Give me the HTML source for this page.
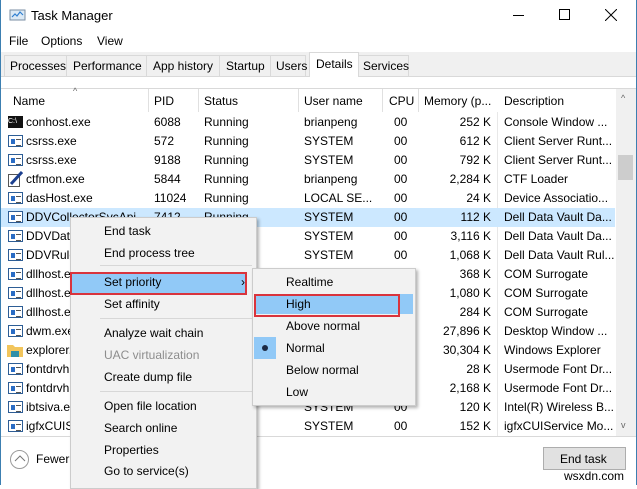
<!DOCTYPE html>
<html><head><meta charset="utf-8"><style>
*{margin:0;padding:0;box-sizing:border-box}
body{width:637px;height:485px;overflow:hidden;background:#fff;font-family:"Liberation Sans",sans-serif;font-size:12px;color:#000;position:relative}
.a{position:absolute;white-space:nowrap}
.row{position:absolute;left:1px;width:614px;height:19px}
.c{position:absolute;top:2px;white-space:nowrap;overflow:hidden}
.ic{position:absolute;left:7px;top:3px;width:15px;height:12px;border:1px solid #2d5d95;background:#fff}
.ic:before{content:"";position:absolute;left:2px;top:3px;width:4px;height:5px;background:#2a6cc4}
.ic:after{content:"";position:absolute;left:7px;top:3px;width:5px;height:5px;border-top:1px solid #555;border-bottom:1px solid #555}
.vl{position:absolute;top:89px;width:1px;height:347px;background:#e8e8e8}
.hl{position:absolute;top:89px;width:1px;height:23px;background:#e0e0e0}
.m{position:absolute;left:104px;white-space:nowrap}
.s{position:absolute;left:286px;white-space:nowrap}
</style></head><body>
<div class="a" style="left:0;top:0;width:1px;height:485px;background:#3c7fb1"></div>
<div class="a" style="left:636px;top:0;width:1px;height:485px;background:#3c7fb1"></div>
<!-- title -->
<svg class="a" style="left:9px;top:8px" width="18" height="14"><rect x="1" y="2" width="15" height="10" fill="#dbe9f5" stroke="#7a8ea3"/><polyline points="3,9 6,6 8,8 11,4 14,7" fill="none" stroke="#2f7fd0" stroke-width="1.2"/></svg>
<div class="a" style="left:31px;top:8px;font-size:13px">Task Manager</div>
<div class="a" style="left:513px;top:15px;width:11px;height:1px;background:#000"></div>
<div class="a" style="left:559px;top:9px;width:11px;height:11px;border:1px solid #000"></div>
<svg class="a" style="left:605px;top:9px" width="12" height="12"><path d="M0 0L12 12M12 0L0 12" stroke="#000" stroke-width="1"/></svg>
<!-- menu -->
<div class="a" style="left:9px;top:34px">File</div>
<div class="a" style="left:41px;top:34px">Options</div>
<div class="a" style="left:97px;top:34px">View</div>
<!-- tabs -->
<div class="a" style="left:1px;top:52px;width:635px;height:24px;background:#f0f0f0"></div>
<div class="a" style="left:1px;top:76px;width:635px;height:1px;background:#d9d9d9"></div>
<div class="a" style="left:4px;top:55px;width:302px;height:21px;border:1px solid #d9d9d9;border-bottom:none;background:#f0f0f0"></div>
<div class="a" style="left:66px;top:55px;width:1px;height:21px;background:#d9d9d9"></div>
<div class="a" style="left:146px;top:55px;width:1px;height:21px;background:#d9d9d9"></div>
<div class="a" style="left:219px;top:55px;width:1px;height:21px;background:#d9d9d9"></div>
<div class="a" style="left:270px;top:55px;width:1px;height:21px;background:#d9d9d9"></div>
<div class="a" style="left:309px;top:52px;width:50px;height:25px;border:1px solid #d9d9d9;border-bottom:none;background:#fff"></div>
<div class="a" style="left:358px;top:55px;width:51px;height:21px;border:1px solid #d9d9d9;border-bottom:none;background:#f0f0f0"></div>
<div class="a" style="left:10px;top:59px">Processes</div>
<div class="a" style="left:73px;top:59px">Performance</div>
<div class="a" style="left:153px;top:59px">App history</div>
<div class="a" style="left:226px;top:59px">Startup</div>
<div class="a" style="left:276px;top:59px">Users</div>
<div class="a" style="left:316px;top:57px">Details</div>
<div class="a" style="left:363px;top:59px">Services</div>
<!-- list -->
<div class="a" style="left:1px;top:88px;width:635px;height:1px;background:#d9d9d9"></div>
<div class="a" style="left:73px;top:86px;font-size:9px;color:#666">^</div>
<div class="a" style="left:13px;top:94px">Name</div>
<div class="a" style="left:154px;top:94px">PID</div>
<div class="a" style="left:204px;top:94px">Status</div>
<div class="a" style="left:304px;top:94px">User name</div>
<div class="a" style="left:389px;top:94px">CPU</div>
<div class="a" style="left:424px;top:94px">Memory (p...</div>
<div class="a" style="left:504px;top:94px">Description</div>
<div class="hl" style="left:148px"></div><div class="hl" style="left:198px"></div><div class="hl" style="left:298px"></div><div class="hl" style="left:382px"></div><div class="hl" style="left:418px"></div>
<div class="vl" style="left:497px;top:112px;height:324px"></div>
<div class="a" style="left:616px;top:89px;width:20px;height:347px;background:#f0f0f0"></div>
<div class="a" style="left:618px;top:155px;width:15px;height:25px;background:#cdcdcd"></div>
<div class="a" style="left:621px;top:93px;font-size:9px;color:#666">^</div>
<div class="a" style="left:621px;top:420px;font-size:9px;color:#666">v</div>
<div class="row" style="top:208px;background:#cce8ff"></div>

<div class="row" style="top:113px"><div class="a" style="left:7px;top:3px;width:15px;height:12px;background:#111;color:#fff;font-size:7px;line-height:12px">C:\</div><div class="c" style="left:25px">conhost.exe</div><div class="c" style="left:153px">6088</div><div class="c" style="left:203px">Running</div><div class="c" style="left:303px">brianpeng</div><div class="c" style="left:393px">00</div><div class="c" style="left:420px;width:70px;text-align:right">252 K</div><div class="c" style="left:503px;width:110px">Console Window ...</div></div>
<div class="row" style="top:132px"><div class="ic"></div><div class="c" style="left:25px">csrss.exe</div><div class="c" style="left:153px">572</div><div class="c" style="left:203px">Running</div><div class="c" style="left:303px">SYSTEM</div><div class="c" style="left:393px">00</div><div class="c" style="left:420px;width:70px;text-align:right">612 K</div><div class="c" style="left:503px;width:110px">Client Server Runt...</div></div>
<div class="row" style="top:151px"><div class="ic"></div><div class="c" style="left:25px">csrss.exe</div><div class="c" style="left:153px">9188</div><div class="c" style="left:203px">Running</div><div class="c" style="left:303px">SYSTEM</div><div class="c" style="left:393px">00</div><div class="c" style="left:420px;width:70px;text-align:right">792 K</div><div class="c" style="left:503px;width:110px">Client Server Runt...</div></div>
<div class="row" style="top:170px"><svg class="a" style="left:7px;top:1px" width="15" height="16"><rect x="0.5" y="3.5" width="11" height="12" fill="#fff" stroke="#555"/><path d="M3 13L14 1" stroke="#1b3f8f" stroke-width="3"/></svg><div class="c" style="left:25px">ctfmon.exe</div><div class="c" style="left:153px">5844</div><div class="c" style="left:203px">Running</div><div class="c" style="left:303px">brianpeng</div><div class="c" style="left:393px">00</div><div class="c" style="left:420px;width:70px;text-align:right">2,284 K</div><div class="c" style="left:503px;width:110px">CTF Loader</div></div>
<div class="row" style="top:189px"><div class="ic"></div><div class="c" style="left:25px">dasHost.exe</div><div class="c" style="left:153px">11024</div><div class="c" style="left:203px">Running</div><div class="c" style="left:303px">LOCAL SE...</div><div class="c" style="left:393px">00</div><div class="c" style="left:420px;width:70px;text-align:right">24 K</div><div class="c" style="left:503px;width:110px">Device Associatio...</div></div>
<div class="row" style="top:208px"><div class="ic"></div><div class="c" style="left:25px">DDVCollectorSvcApi</div><div class="c" style="left:153px">7412</div><div class="c" style="left:203px">Running</div><div class="c" style="left:303px">SYSTEM</div><div class="c" style="left:393px">00</div><div class="c" style="left:420px;width:70px;text-align:right">112 K</div><div class="c" style="left:503px;width:110px">Dell Data Vault Da...</div></div>
<div class="row" style="top:227px"><div class="ic"></div><div class="c" style="left:25px">DDVData</div><div class="c" style="left:303px">SYSTEM</div><div class="c" style="left:393px">00</div><div class="c" style="left:420px;width:70px;text-align:right">3,116 K</div><div class="c" style="left:503px;width:110px">Dell Data Vault Da...</div></div>
<div class="row" style="top:246px"><div class="ic"></div><div class="c" style="left:25px">DDVRule</div><div class="c" style="left:303px">SYSTEM</div><div class="c" style="left:393px">00</div><div class="c" style="left:420px;width:70px;text-align:right">1,068 K</div><div class="c" style="left:503px;width:110px">Dell Data Vault Rul...</div></div>
<div class="row" style="top:265px"><div class="ic"></div><div class="c" style="left:25px">dllhost.e</div><div class="c" style="left:420px;width:70px;text-align:right">368 K</div><div class="c" style="left:503px;width:110px">COM Surrogate</div></div>
<div class="row" style="top:284px"><div class="ic"></div><div class="c" style="left:25px">dllhost.e</div><div class="c" style="left:420px;width:70px;text-align:right">1,080 K</div><div class="c" style="left:503px;width:110px">COM Surrogate</div></div>
<div class="row" style="top:303px"><div class="ic"></div><div class="c" style="left:25px">dllhost.e</div><div class="c" style="left:420px;width:70px;text-align:right">284 K</div><div class="c" style="left:503px;width:110px">COM Surrogate</div></div>
<div class="row" style="top:322px"><div class="ic"></div><div class="c" style="left:25px">dwm.exe</div><div class="c" style="left:420px;width:70px;text-align:right">27,896 K</div><div class="c" style="left:503px;width:110px">Desktop Window ...</div></div>
<div class="row" style="top:341px"><svg class="a" style="left:6px;top:2px" width="16" height="15"><path d="M0 2h6l2 2h8v10H0z" fill="#f2c55c"/><rect x="4" y="8" width="8" height="6" fill="#2e8fa8"/></svg><div class="c" style="left:25px">explorer.</div><div class="c" style="left:420px;width:70px;text-align:right">30,304 K</div><div class="c" style="left:503px;width:110px">Windows Explorer</div></div>
<div class="row" style="top:360px"><div class="ic"></div><div class="c" style="left:25px">fontdrvh</div><div class="c" style="left:420px;width:70px;text-align:right">28 K</div><div class="c" style="left:503px;width:110px">Usermode Font Dr...</div></div>
<div class="row" style="top:379px"><div class="ic"></div><div class="c" style="left:25px">fontdrvh</div><div class="c" style="left:420px;width:70px;text-align:right">2,168 K</div><div class="c" style="left:503px;width:110px">Usermode Font Dr...</div></div>
<div class="row" style="top:398px"><div class="ic"></div><div class="c" style="left:25px">ibtsiva.e</div><div class="c" style="left:303px">SYSTEM</div><div class="c" style="left:393px">00</div><div class="c" style="left:420px;width:70px;text-align:right">120 K</div><div class="c" style="left:503px;width:110px">Intel(R) Wireless B...</div></div>
<div class="row" style="top:417px"><div class="ic"></div><div class="c" style="left:25px">igfxCUIS</div><div class="c" style="left:303px">SYSTEM</div><div class="c" style="left:393px">00</div><div class="c" style="left:420px;width:70px;text-align:right">152 K</div><div class="c" style="left:503px;width:110px">igfxCUIService Mo...</div></div>
<!-- footer -->
<div class="a" style="left:1px;top:436px;width:635px;height:1px;background:#d9d9d9"></div>
<div class="a" style="left:10px;top:450px;width:19px;height:19px;border:1px solid #9a9a9a;border-radius:50%"></div>
<svg class="a" style="left:14px;top:455px" width="12" height="8"><path d="M1 6L6 1L11 6" fill="none" stroke="#777"/></svg>
<div class="a" style="left:36px;top:452px">Fewer</div>
<div class="a" style="left:543px;top:447px;width:83px;height:23px;background:#e1e1e1;border:1px solid #adadad"></div>
<div class="a" style="left:560px;top:452px">End task</div>
<div class="a" style="left:564px;top:469px;font-size:12px">wsxdn.com</div>
<!-- context menu -->
<div class="a" style="left:70px;top:217px;width:187px;height:272px;background:#f2f2f2;border:1px solid #ccc;box-shadow:2px 2px 3px rgba(0,0,0,.3)"></div>
<div class="m" style="top:224px">End task</div>
<div class="m" style="top:246px">End process tree</div>
<div class="a" style="left:100px;top:265px;width:152px;height:1px;background:#d7d7d7"></div>
<div class="a" style="left:71px;top:272px;width:176px;height:21px;background:#91c9f7"></div>
<div class="a" style="left:70px;top:272px;width:177px;height:23px;border:2px solid #d9343d"></div>
<div class="m" style="top:275px">Set priority</div>
<div class="a" style="left:241px;top:275px">›</div>
<div class="m" style="top:297px">Set affinity</div>
<div class="a" style="left:100px;top:318px;width:152px;height:1px;background:#d7d7d7"></div>
<div class="m" style="top:326px">Analyze wait chain</div>
<div class="m" style="top:348px;color:#8d8d8d">UAC virtualization</div>
<div class="m" style="top:370px">Create dump file</div>
<div class="a" style="left:100px;top:391px;width:152px;height:1px;background:#d7d7d7"></div>
<div class="m" style="top:399px">Open file location</div>
<div class="m" style="top:421px">Search online</div>
<div class="m" style="top:443px">Properties</div>
<div class="m" style="top:464px">Go to service(s)</div>
<!-- submenu -->
<div class="a" style="left:252px;top:268px;width:164px;height:138px;background:#f2f2f2;border:1px solid #ccc;box-shadow:2px 2px 3px rgba(0,0,0,.3)"></div>
<div class="s" style="top:275px">Realtime</div>
<div class="a" style="left:254px;top:294px;width:159px;height:20px;background:#91c9f7"></div>
<div class="a" style="left:254px;top:294px;width:146px;height:23px;border:2px solid #d9343d"></div>
<div class="s" style="top:297px">High</div>
<div class="s" style="top:319px">Above normal</div>
<div class="a" style="left:254px;top:337px;width:22px;height:22px;background:#91c9f7"></div>
<div class="a" style="left:262px;top:345px;width:6px;height:6px;border-radius:50%;background:#1c2a44"></div>
<div class="s" style="top:341px">Normal</div>
<div class="s" style="top:363px">Below normal</div>
<div class="s" style="top:385px">Low</div>
</body></html>
